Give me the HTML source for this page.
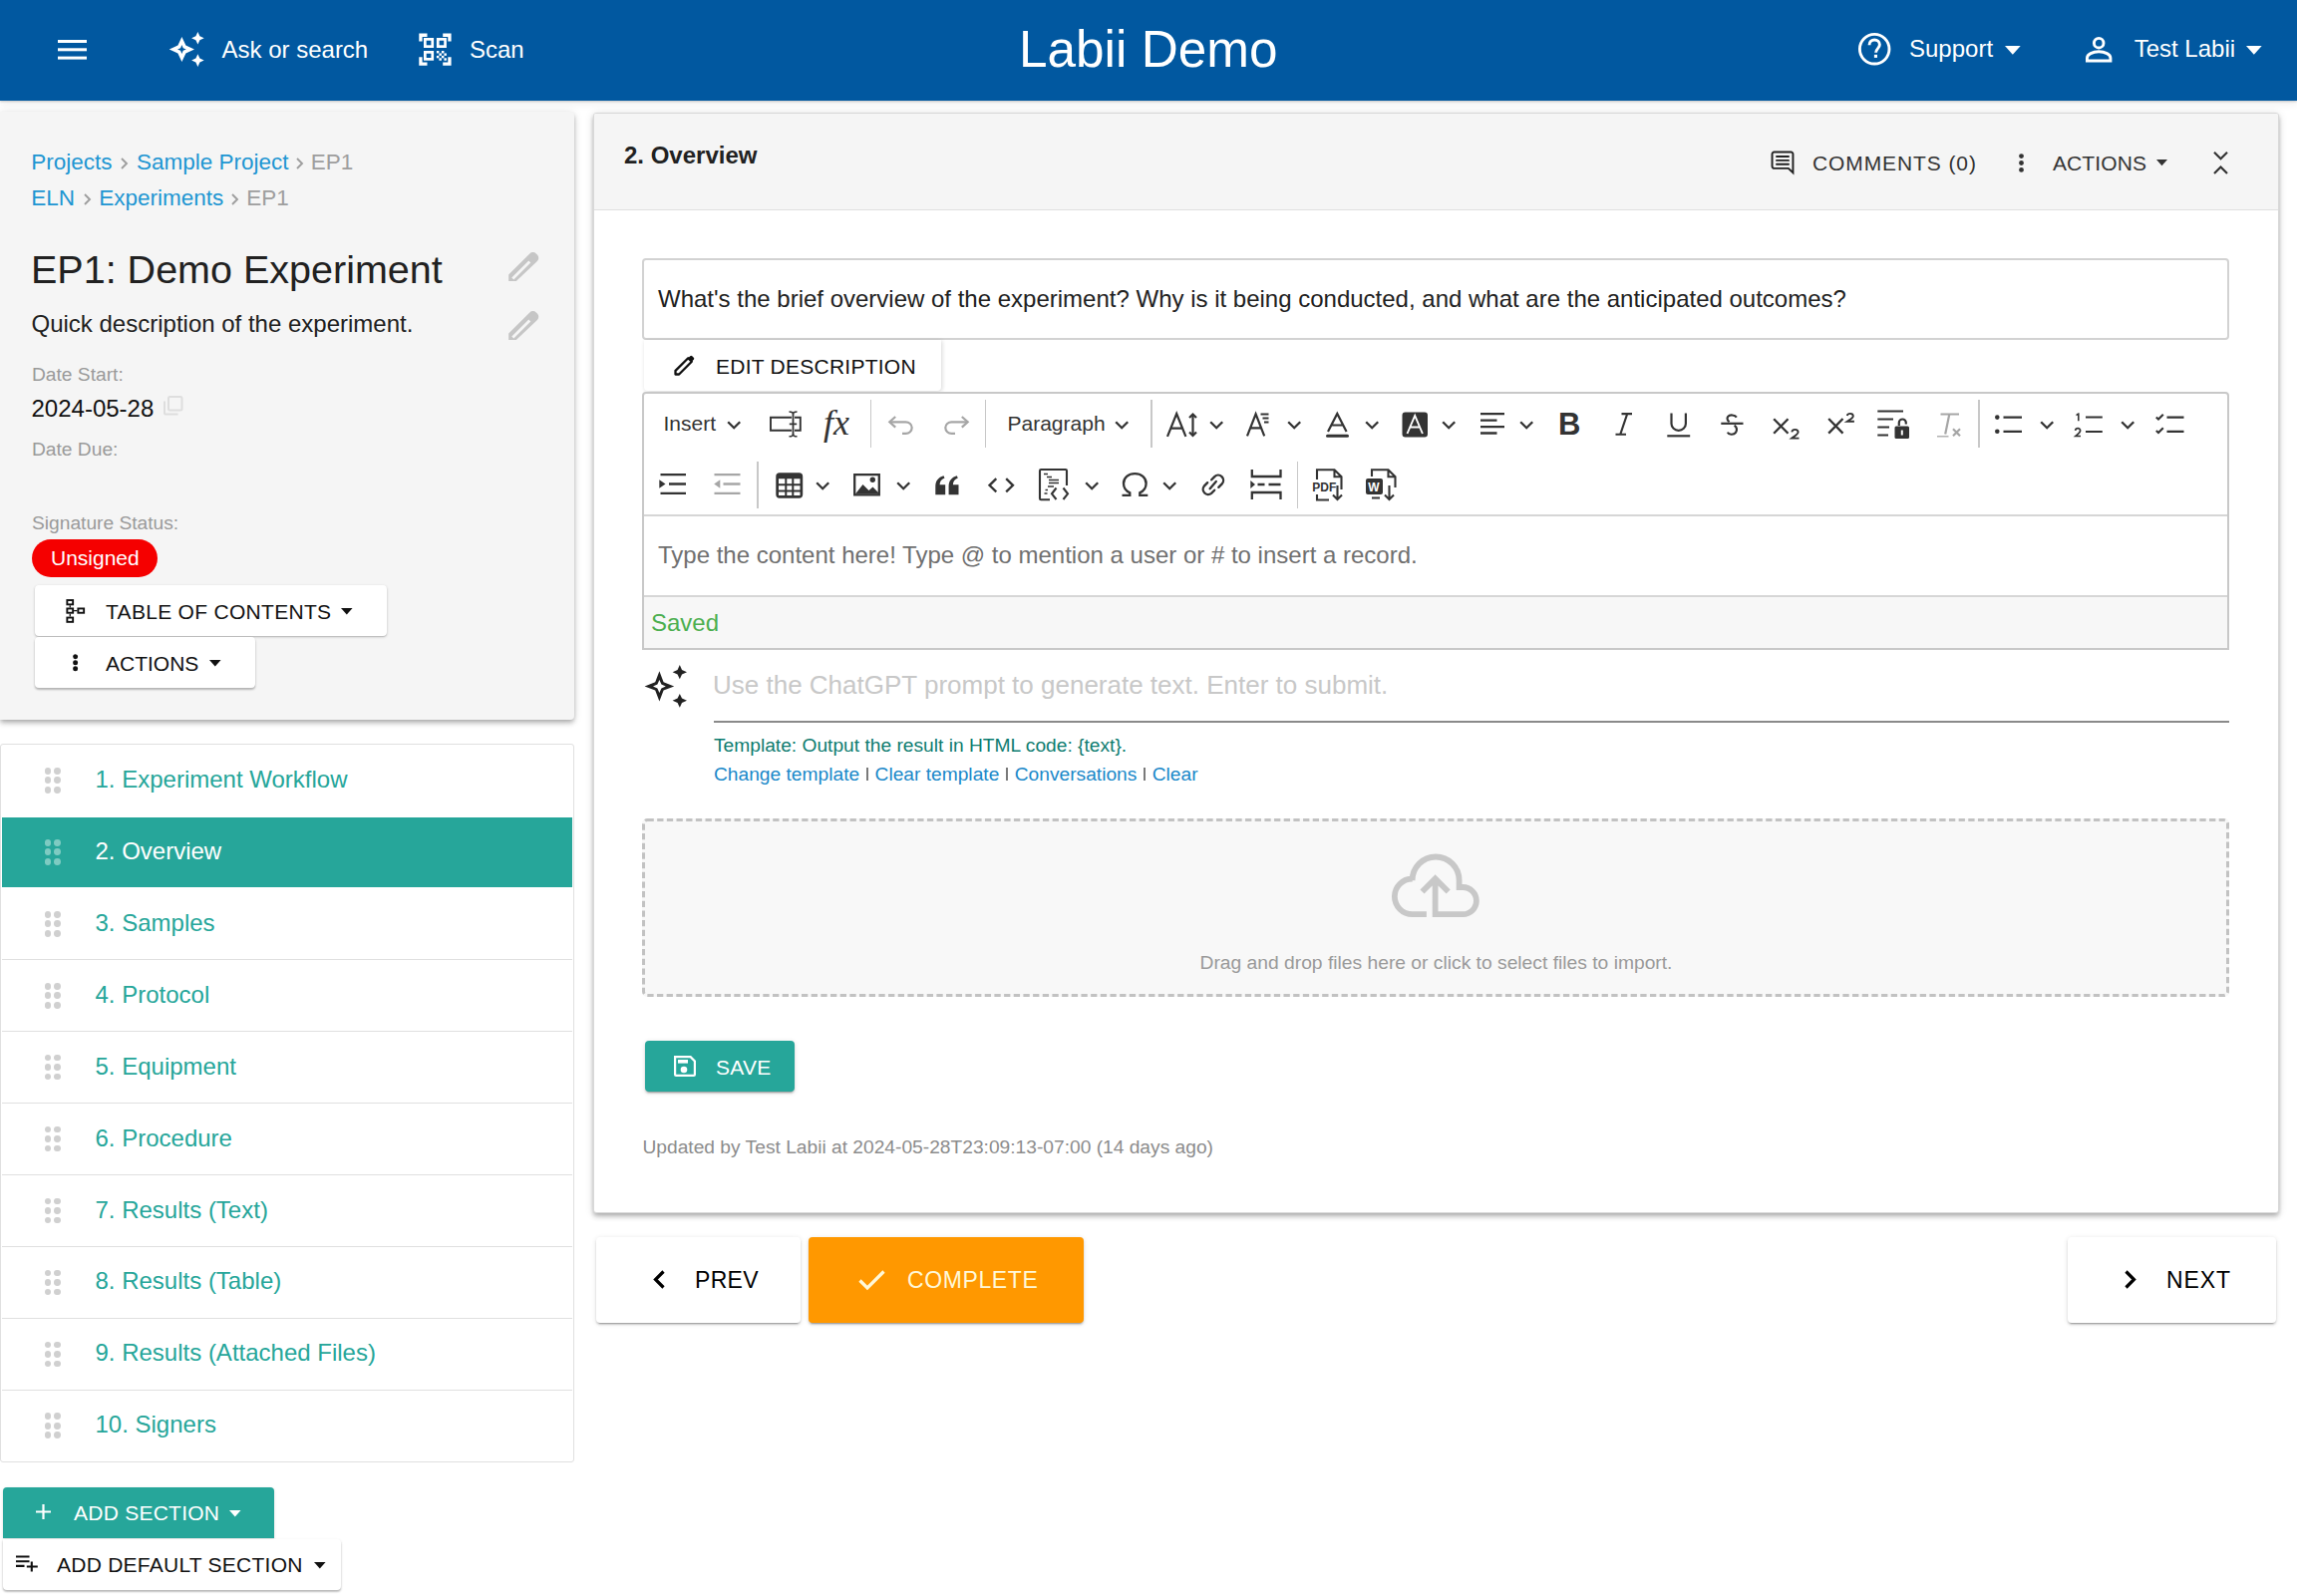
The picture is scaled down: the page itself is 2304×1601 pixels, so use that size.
<!DOCTYPE html>
<html><head><meta charset="utf-8">
<style>
*{box-sizing:border-box;margin:0;padding:0}
html,body{width:2304px;height:1601px;overflow:hidden;background:#fff;font-family:"Liberation Sans",sans-serif;color:#212121}
.abs{position:absolute}
.t{position:absolute;white-space:pre;line-height:1}
svg{position:absolute;overflow:visible}
.btnw{position:absolute;background:#fff;border-radius:4px;box-shadow:0 3px 1px -2px rgba(0,0,0,.2),0 2px 2px 0 rgba(0,0,0,.14),0 1px 5px 0 rgba(0,0,0,.12)}
.link{color:#1e96d2}
.grey{color:#9e9e9e}
.lbl{color:#9a9a9a}
</style></head><body>

<div class="abs" style="left:0;top:0;width:2304px;height:101px;background:#0158a0;box-shadow:0 1px 2px rgba(0,0,0,.18),0 3px 8px rgba(0,0,0,.07)"></div>
<svg style="left:57.5px;top:40px" width="29" height="20" viewBox="0 0 29 20"><g fill="#fff"><rect x="0" y="0" width="29" height="3"/><rect x="0" y="8.3" width="29" height="3"/><rect x="0" y="16.6" width="29" height="3"/></g></svg>
<svg style="left:165px;top:28px" width="45" height="44" viewBox="165 28 45 44"><path fill="#fff" fill-rule="evenodd" d="M182.40 36.90L186.40 45.50 195.00 49.50 186.40 53.50 182.40 62.10 178.40 53.50 169.80 49.50 178.40 45.50ZM182.40 45.10L183.70 48.20 186.80 49.50 183.70 50.80 182.40 53.90 181.10 50.80 178.00 49.50 181.10 48.20Z"/><path fill="#fff" d="M198.40 32.00L200.40 36.30 204.70 38.30 200.40 40.30 198.40 44.60 196.40 40.30 192.10 38.30 196.40 36.30ZM198.40 54.30L200.40 58.60 204.70 60.60 200.40 62.60 198.40 66.90 196.40 62.60 192.10 60.60 196.40 58.60Z"/></svg>
<div class="t" style="left:222.5px;top:37.7px;font-size:24px;color:#fff">Ask or search</div>
<svg style="left:410px;top:25px" width="55" height="50" viewBox="410 25 55 50"><g fill="none" stroke="#fff" stroke-width="3.3"><path d="M421.95 41.6V35.25H428.5M444.2 35.25H450.95V41.6M421.95 57.3V64.1H428.5M444.2 64.1H450.95V57.3"/></g><g fill="none" stroke="#fff" stroke-width="2.7"><rect x="426.35" y="39.35" width="7.4" height="7.3"/><rect x="439.25" y="39.35" width="7.3" height="7.3"/><rect x="426.35" y="52.35" width="7.4" height="7"/></g><g fill="#fff"><rect x="437.90" y="51.00" width="2.5" height="2.43"/><rect x="442.90" y="51.00" width="2.5" height="2.43"/><rect x="440.40" y="53.43" width="2.5" height="2.43"/><rect x="445.40" y="53.43" width="2.5" height="2.43"/><rect x="437.90" y="55.86" width="2.5" height="2.43"/><rect x="442.90" y="55.86" width="2.5" height="2.43"/><rect x="440.40" y="58.29" width="2.5" height="2.43"/><rect x="445.40" y="58.29" width="2.5" height="2.43"/></g></svg>
<div class="t" style="left:471px;top:37.7px;font-size:24px;color:#fff">Scan</div>
<div class="t" style="left:1022px;top:23.6px;font-size:51.3px;color:#fff">Labii Demo</div>
<svg style="left:1864px;top:33.3px" width="32.4" height="32.4" viewBox="0 0 32.4 32.4"><circle cx="16.2" cy="16.2" r="14.8" fill="none" stroke="#fff" stroke-width="2.9"/><path d="M11 12.2C11 9 13.3 7 16.2 7C19.1 7 21.4 9 21.4 11.8C21.4 15.5 17.6 15.8 17.6 19.8" fill="none" stroke="#fff" stroke-width="2.9"/><rect x="15.9" y="21.8" width="3.1" height="3.1" fill="#fff"/></svg>
<div class="t" style="left:1915px;top:36.8px;font-size:24px;color:#fff">Support</div>
<svg style="left:2010.8px;top:45.5px" width="15.7" height="8.8" viewBox="0 0 15.7 8.8"><path fill="#fff" d="M0 0h15.7L7.85 8.8z"/></svg>
<svg style="left:2091.8px;top:36.7px" width="26.4" height="25.4" viewBox="0 0 26.4 25.4"><g fill="none" stroke="#fff" stroke-width="2.9"><circle cx="13.2" cy="6.2" r="4.8"/><path d="M1.45 23.95V21.2C1.45 17.5 7 14.8 13.2 14.8S24.95 17.5 24.95 21.2V23.95Z"/></g></svg>
<div class="t" style="left:2140.7px;top:36.8px;font-size:24px;color:#fff">Test Labii</div>
<svg style="left:2253px;top:45.5px" width="15.7" height="8.8" viewBox="0 0 15.7 8.8"><path fill="#fff" d="M0 0h15.7L7.85 8.8z"/></svg>

<div class="abs" style="left:0;top:112px;width:576px;height:610px;background:#f5f5f5;border-radius:0 4px 4px 0;box-shadow:0 2px 4px -1px rgba(0,0,0,.2),0 4px 5px 0 rgba(0,0,0,.14),0 1px 10px 0 rgba(0,0,0,.12)"></div>
<div class="t link" style="left:31.3px;top:152.2px;font-size:22.5px">Projects</div><svg style="left:121.3px;top:158.3px" width="7" height="12" viewBox="0 0 7 12"><path d="M1 1l5 5-5 5" fill="none" stroke="#9e9e9e" stroke-width="1.9"/></svg><div class="t link" style="left:137px;top:152.2px;font-size:22.5px">Sample Project</div><svg style="left:296.8px;top:158.3px" width="7" height="12" viewBox="0 0 7 12"><path d="M1 1l5 5-5 5" fill="none" stroke="#9e9e9e" stroke-width="1.9"/></svg><div class="t grey" style="left:311.8px;top:152.2px;font-size:22.5px">EP1</div>
<div class="t link" style="left:31.3px;top:187.6px;font-size:22.5px">ELN</div><svg style="left:84px;top:193.7px" width="7" height="12" viewBox="0 0 7 12"><path d="M1 1l5 5-5 5" fill="none" stroke="#9e9e9e" stroke-width="1.9"/></svg><div class="t link" style="left:99.2px;top:187.6px;font-size:22.5px">Experiments</div><svg style="left:232.2px;top:193.7px" width="7" height="12" viewBox="0 0 7 12"><path d="M1 1l5 5-5 5" fill="none" stroke="#9e9e9e" stroke-width="1.9"/></svg><div class="t grey" style="left:247.3px;top:187.6px;font-size:22.5px">EP1</div>
<div class="t" style="left:31px;top:251.3px;font-size:39.5px;color:#212121">EP1: Demo Experiment</div>
<svg style="left:500px;top:245px" width="45" height="45" viewBox="500 245 45 45"><path fill="#c6c6c6" fill-rule="evenodd" transform="translate(0 0)" d="M510.2 282.1L510.2 275.5 531.3 254.4A4.6 4.6 0 0 1 537.8 254.4L538.9 255.5A4.6 4.6 0 0 1 538.9 262L517.8 282.1ZM513.3 278.6L530.3 261.6 532.3 263.6 515.3 280.6Z"/></svg>
<div class="t" style="left:31.5px;top:313.1px;font-size:24px;color:#212121">Quick description of the experiment.</div>
<svg style="left:500px;top:304.4px" width="45" height="45" viewBox="500 304.4 45 45"><path fill="#c6c6c6" fill-rule="evenodd" transform="translate(0 59.4)" d="M510.2 282.1L510.2 275.5 531.3 254.4A4.6 4.6 0 0 1 537.8 254.4L538.9 255.5A4.6 4.6 0 0 1 538.9 262L517.8 282.1ZM513.3 278.6L530.3 261.6 532.3 263.6 515.3 280.6Z"/></svg>
<div class="t lbl" style="left:32px;top:366.1px;font-size:19.2px">Date Start:</div>
<div class="t" style="left:31.5px;top:398.2px;font-size:24px;color:#111">2024-05-28</div>
<svg style="left:163.5px;top:396.5px" width="19.5" height="19.5" viewBox="0 0 19.5 19.5"><g fill="none" stroke="#dedede" stroke-width="2"><rect x="5" y="1" width="13.5" height="13.5" rx="1.5"/><path d="M1 5.5V17.5A1 1 0 0 0 2 18.5H14.5"/></g></svg>
<div class="t lbl" style="left:32px;top:440.6px;font-size:19.2px">Date Due:</div>
<div class="t lbl" style="left:32px;top:514.6px;font-size:19.2px">Signature Status:</div>
<div class="abs" style="left:32.2px;top:540.5px;width:126px;height:38.3px;border-radius:19.15px;background:#f50000"></div>
<div class="t" style="left:51px;top:549.2px;font-size:21px;color:#fff">Unsigned</div>
<div class="btnw" style="left:35.2px;top:587.2px;width:352.6px;height:51px;box-shadow:0 1px 3px rgba(0,0,0,.2),0 1px 1px rgba(0,0,0,.1)"></div>
<svg style="left:66.2px;top:601px" width="19.5" height="24" viewBox="0 0 19.5 24"><g fill="none" stroke="#111" stroke-width="1.9"><rect x="1.35" y="1.05" width="5.8" height="4.3"/><rect x="1.35" y="9.45" width="5.8" height="4.3"/><rect x="1.35" y="18.55" width="5.8" height="4.3"/><rect x="12.35" y="9.45" width="5.8" height="4.3"/></g><path d="M4.25 6.3V8.5M4.25 14.7V17.6M8.1 11.6H11.4" stroke="#111" stroke-width="1.3"/></svg>
<div class="t" style="left:106px;top:602.8px;font-size:21px;letter-spacing:0.3px;color:#111">TABLE OF CONTENTS</div>
<svg style="left:342.4px;top:609.8px" width="11.6" height="6.4" viewBox="0 0 11.6 6.4"><path fill="#111" d="M0 0h11.6L5.8 6.4z"/></svg>
<div class="btnw" style="left:35.2px;top:639.3px;width:220.6px;height:50.7px;box-shadow:0 2px 2px rgba(0,0,0,.2),0 1px 3px rgba(0,0,0,.12)"></div>
<svg style="left:72.7px;top:656px" width="5.3" height="17.4" viewBox="0 0 5.3 17.4"><g fill="#111"><circle cx="2.65" cy="2.65" r="2.5"/><circle cx="2.65" cy="8.7" r="2.5"/><circle cx="2.65" cy="14.75" r="2.5"/></g></svg>
<div class="t" style="left:106px;top:654.8px;font-size:21px;letter-spacing:0px;color:#111">ACTIONS</div>
<svg style="left:210.4px;top:661.8px" width="11.6" height="6.4" viewBox="0 0 11.6 6.4"><path fill="#111" d="M0 0h11.6L5.8 6.4z"/></svg>
<div class="abs" style="left:0;top:745.8px;width:576px;height:721.5px;border:1.6px solid #e0e0e0;border-radius:3px;background:#fff"></div>
<div class="abs" style="left:1.6px;top:961.85px;width:572.8px;height:1.6px;background:#e0e0e0"></div>
<div class="abs" style="left:1.6px;top:1033.80px;width:572.8px;height:1.6px;background:#e0e0e0"></div>
<div class="abs" style="left:1.6px;top:1105.75px;width:572.8px;height:1.6px;background:#e0e0e0"></div>
<div class="abs" style="left:1.6px;top:1177.70px;width:572.8px;height:1.6px;background:#e0e0e0"></div>
<div class="abs" style="left:1.6px;top:1249.65px;width:572.8px;height:1.6px;background:#e0e0e0"></div>
<div class="abs" style="left:1.6px;top:1321.60px;width:572.8px;height:1.6px;background:#e0e0e0"></div>
<div class="abs" style="left:1.6px;top:1393.55px;width:572.8px;height:1.6px;background:#e0e0e0"></div>
<div class="abs" style="left:44.70px;top:769.90px;width:6.8px;height:6.8px;border-radius:50%;background:#d0d0d0"></div>
<div class="abs" style="left:54.20px;top:769.90px;width:6.8px;height:6.8px;border-radius:50%;background:#d0d0d0"></div>
<div class="abs" style="left:44.70px;top:779.40px;width:6.8px;height:6.8px;border-radius:50%;background:#d0d0d0"></div>
<div class="abs" style="left:54.20px;top:779.40px;width:6.8px;height:6.8px;border-radius:50%;background:#d0d0d0"></div>
<div class="abs" style="left:44.70px;top:788.90px;width:6.8px;height:6.8px;border-radius:50%;background:#d0d0d0"></div>
<div class="abs" style="left:54.20px;top:788.90px;width:6.8px;height:6.8px;border-radius:50%;background:#d0d0d0"></div>
<div class="t" style="left:95.5px;top:769.80px;font-size:24px;color:#26a69a">1. Experiment Workflow</div>
<div class="abs" style="left:1.8px;top:819.8px;width:572px;height:69.9px;background:#26a69a"></div>
<div class="abs" style="left:44.70px;top:841.85px;width:6.8px;height:6.8px;border-radius:50%;background:#7ecbc2"></div>
<div class="abs" style="left:54.20px;top:841.85px;width:6.8px;height:6.8px;border-radius:50%;background:#7ecbc2"></div>
<div class="abs" style="left:44.70px;top:851.35px;width:6.8px;height:6.8px;border-radius:50%;background:#7ecbc2"></div>
<div class="abs" style="left:54.20px;top:851.35px;width:6.8px;height:6.8px;border-radius:50%;background:#7ecbc2"></div>
<div class="abs" style="left:44.70px;top:860.85px;width:6.8px;height:6.8px;border-radius:50%;background:#7ecbc2"></div>
<div class="abs" style="left:54.20px;top:860.85px;width:6.8px;height:6.8px;border-radius:50%;background:#7ecbc2"></div>
<div class="t" style="left:95.5px;top:841.75px;font-size:24px;color:#fff">2. Overview</div>
<div class="abs" style="left:44.70px;top:913.80px;width:6.8px;height:6.8px;border-radius:50%;background:#d0d0d0"></div>
<div class="abs" style="left:54.20px;top:913.80px;width:6.8px;height:6.8px;border-radius:50%;background:#d0d0d0"></div>
<div class="abs" style="left:44.70px;top:923.30px;width:6.8px;height:6.8px;border-radius:50%;background:#d0d0d0"></div>
<div class="abs" style="left:54.20px;top:923.30px;width:6.8px;height:6.8px;border-radius:50%;background:#d0d0d0"></div>
<div class="abs" style="left:44.70px;top:932.80px;width:6.8px;height:6.8px;border-radius:50%;background:#d0d0d0"></div>
<div class="abs" style="left:54.20px;top:932.80px;width:6.8px;height:6.8px;border-radius:50%;background:#d0d0d0"></div>
<div class="t" style="left:95.5px;top:913.70px;font-size:24px;color:#26a69a">3. Samples</div>
<div class="abs" style="left:44.70px;top:985.75px;width:6.8px;height:6.8px;border-radius:50%;background:#d0d0d0"></div>
<div class="abs" style="left:54.20px;top:985.75px;width:6.8px;height:6.8px;border-radius:50%;background:#d0d0d0"></div>
<div class="abs" style="left:44.70px;top:995.25px;width:6.8px;height:6.8px;border-radius:50%;background:#d0d0d0"></div>
<div class="abs" style="left:54.20px;top:995.25px;width:6.8px;height:6.8px;border-radius:50%;background:#d0d0d0"></div>
<div class="abs" style="left:44.70px;top:1004.75px;width:6.8px;height:6.8px;border-radius:50%;background:#d0d0d0"></div>
<div class="abs" style="left:54.20px;top:1004.75px;width:6.8px;height:6.8px;border-radius:50%;background:#d0d0d0"></div>
<div class="t" style="left:95.5px;top:985.65px;font-size:24px;color:#26a69a">4. Protocol</div>
<div class="abs" style="left:44.70px;top:1057.70px;width:6.8px;height:6.8px;border-radius:50%;background:#d0d0d0"></div>
<div class="abs" style="left:54.20px;top:1057.70px;width:6.8px;height:6.8px;border-radius:50%;background:#d0d0d0"></div>
<div class="abs" style="left:44.70px;top:1067.20px;width:6.8px;height:6.8px;border-radius:50%;background:#d0d0d0"></div>
<div class="abs" style="left:54.20px;top:1067.20px;width:6.8px;height:6.8px;border-radius:50%;background:#d0d0d0"></div>
<div class="abs" style="left:44.70px;top:1076.70px;width:6.8px;height:6.8px;border-radius:50%;background:#d0d0d0"></div>
<div class="abs" style="left:54.20px;top:1076.70px;width:6.8px;height:6.8px;border-radius:50%;background:#d0d0d0"></div>
<div class="t" style="left:95.5px;top:1057.60px;font-size:24px;color:#26a69a">5. Equipment</div>
<div class="abs" style="left:44.70px;top:1129.65px;width:6.8px;height:6.8px;border-radius:50%;background:#d0d0d0"></div>
<div class="abs" style="left:54.20px;top:1129.65px;width:6.8px;height:6.8px;border-radius:50%;background:#d0d0d0"></div>
<div class="abs" style="left:44.70px;top:1139.15px;width:6.8px;height:6.8px;border-radius:50%;background:#d0d0d0"></div>
<div class="abs" style="left:54.20px;top:1139.15px;width:6.8px;height:6.8px;border-radius:50%;background:#d0d0d0"></div>
<div class="abs" style="left:44.70px;top:1148.65px;width:6.8px;height:6.8px;border-radius:50%;background:#d0d0d0"></div>
<div class="abs" style="left:54.20px;top:1148.65px;width:6.8px;height:6.8px;border-radius:50%;background:#d0d0d0"></div>
<div class="t" style="left:95.5px;top:1129.55px;font-size:24px;color:#26a69a">6. Procedure</div>
<div class="abs" style="left:44.70px;top:1201.60px;width:6.8px;height:6.8px;border-radius:50%;background:#d0d0d0"></div>
<div class="abs" style="left:54.20px;top:1201.60px;width:6.8px;height:6.8px;border-radius:50%;background:#d0d0d0"></div>
<div class="abs" style="left:44.70px;top:1211.10px;width:6.8px;height:6.8px;border-radius:50%;background:#d0d0d0"></div>
<div class="abs" style="left:54.20px;top:1211.10px;width:6.8px;height:6.8px;border-radius:50%;background:#d0d0d0"></div>
<div class="abs" style="left:44.70px;top:1220.60px;width:6.8px;height:6.8px;border-radius:50%;background:#d0d0d0"></div>
<div class="abs" style="left:54.20px;top:1220.60px;width:6.8px;height:6.8px;border-radius:50%;background:#d0d0d0"></div>
<div class="t" style="left:95.5px;top:1201.50px;font-size:24px;color:#26a69a">7. Results (Text)</div>
<div class="abs" style="left:44.70px;top:1273.55px;width:6.8px;height:6.8px;border-radius:50%;background:#d0d0d0"></div>
<div class="abs" style="left:54.20px;top:1273.55px;width:6.8px;height:6.8px;border-radius:50%;background:#d0d0d0"></div>
<div class="abs" style="left:44.70px;top:1283.05px;width:6.8px;height:6.8px;border-radius:50%;background:#d0d0d0"></div>
<div class="abs" style="left:54.20px;top:1283.05px;width:6.8px;height:6.8px;border-radius:50%;background:#d0d0d0"></div>
<div class="abs" style="left:44.70px;top:1292.55px;width:6.8px;height:6.8px;border-radius:50%;background:#d0d0d0"></div>
<div class="abs" style="left:54.20px;top:1292.55px;width:6.8px;height:6.8px;border-radius:50%;background:#d0d0d0"></div>
<div class="t" style="left:95.5px;top:1273.45px;font-size:24px;color:#26a69a">8. Results (Table)</div>
<div class="abs" style="left:44.70px;top:1345.50px;width:6.8px;height:6.8px;border-radius:50%;background:#d0d0d0"></div>
<div class="abs" style="left:54.20px;top:1345.50px;width:6.8px;height:6.8px;border-radius:50%;background:#d0d0d0"></div>
<div class="abs" style="left:44.70px;top:1355.00px;width:6.8px;height:6.8px;border-radius:50%;background:#d0d0d0"></div>
<div class="abs" style="left:54.20px;top:1355.00px;width:6.8px;height:6.8px;border-radius:50%;background:#d0d0d0"></div>
<div class="abs" style="left:44.70px;top:1364.50px;width:6.8px;height:6.8px;border-radius:50%;background:#d0d0d0"></div>
<div class="abs" style="left:54.20px;top:1364.50px;width:6.8px;height:6.8px;border-radius:50%;background:#d0d0d0"></div>
<div class="t" style="left:95.5px;top:1345.40px;font-size:24px;color:#26a69a">9. Results (Attached Files)</div>
<div class="abs" style="left:44.70px;top:1417.45px;width:6.8px;height:6.8px;border-radius:50%;background:#d0d0d0"></div>
<div class="abs" style="left:54.20px;top:1417.45px;width:6.8px;height:6.8px;border-radius:50%;background:#d0d0d0"></div>
<div class="abs" style="left:44.70px;top:1426.95px;width:6.8px;height:6.8px;border-radius:50%;background:#d0d0d0"></div>
<div class="abs" style="left:54.20px;top:1426.95px;width:6.8px;height:6.8px;border-radius:50%;background:#d0d0d0"></div>
<div class="abs" style="left:44.70px;top:1436.45px;width:6.8px;height:6.8px;border-radius:50%;background:#d0d0d0"></div>
<div class="abs" style="left:54.20px;top:1436.45px;width:6.8px;height:6.8px;border-radius:50%;background:#d0d0d0"></div>
<div class="t" style="left:95.5px;top:1417.35px;font-size:24px;color:#26a69a">10. Signers</div>
<div class="abs" style="left:3.4px;top:1491.8px;width:272.1px;height:51px;background:#26a69a;border-radius:4px 4px 0 0;box-shadow:0 1px 3px rgba(0,0,0,.15)"></div>
<svg style="left:35.8px;top:1509.4px" width="15" height="15" viewBox="0 0 15 15"><path fill="none" stroke="#fff" stroke-width="2.2" d="M7.5 0v15M0 7.5h15"/></svg>
<div class="t" style="left:74px;top:1507.2px;font-size:21px;letter-spacing:0.25px;color:#fff">ADD SECTION</div>
<svg style="left:230.4px;top:1514.6px" width="11.6" height="6.4" viewBox="0 0 11.6 6.4"><path fill="#fff" d="M0 0h11.6L5.8 6.4z"/></svg>
<div class="btnw" style="left:3.4px;top:1544px;width:338.7px;height:51px;border-radius:0 4px 4px 4px;box-shadow:0 2px 2px rgba(0,0,0,.2),0 1px 3px rgba(0,0,0,.12)"></div>
<svg style="left:15.5px;top:1560px" width="22" height="17" viewBox="0 0 22 17"><g fill="none" stroke="#111" stroke-width="2.1"><path d="M0 1.5H13.5M0 6.2H13.5M0 10.9H8.5M15.8 6.5V16.5M10.8 11.5H21.8"/></g></svg>
<div class="t" style="left:57px;top:1559.1px;font-size:21px;letter-spacing:0.25px;color:#111">ADD DEFAULT SECTION</div>
<svg style="left:314.7px;top:1566.8px" width="11.6" height="6.4" viewBox="0 0 11.6 6.4"><path fill="#111" d="M0 0h11.6L5.8 6.4z"/></svg>

<div class="abs" style="left:594.5px;top:112.5px;width:1691.5px;height:1104px;background:#fff;border:1.5px solid #d8d8d8;border-radius:3px;box-shadow:0 2px 4px -1px rgba(0,0,0,.2),0 4px 5px 0 rgba(0,0,0,.14),0 1px 10px 0 rgba(0,0,0,.12)"></div>
<div class="abs" style="left:596px;top:114px;width:1688.5px;height:97px;background:#f5f5f5;border-bottom:1.8px solid #e0e0e0;border-radius:2px 2px 0 0"></div>
<div class="t" style="left:626px;top:143.9px;font-size:24px;font-weight:700;color:#212121">2. Overview</div>
<!-- main header right -->
<svg style="left:1765px;top:145px" width="45" height="35" viewBox="1765 145 45 35"><path d="M1793.8 168.85H1779.6A2 2 0 0 1 1777.55 166.8V154.6A2 2 0 0 1 1779.6 152.55H1796.4A2 2 0 0 1 1798.45 154.6V173.3Z" fill="none" stroke="#222" stroke-width="1.95" stroke-linejoin="miter"/><path d="M1782 157H1794M1782 160.9H1794M1782 164.8H1794" stroke="#222" stroke-width="1.9" stroke-linecap="round"/></svg>
<div class="t up2" style="left:1818px;top:153px;font-size:21px;letter-spacing:0.9px;color:#333">COMMENTS (0)</div>
<svg style="left:2024px;top:154px" width="7" height="19" viewBox="0 0 7 19"><g fill="#333"><circle cx="3.5" cy="2.6" r="2.4"/><circle cx="3.5" cy="9.5" r="2.4"/><circle cx="3.5" cy="16.4" r="2.4"/></g></svg>
<div class="t" style="left:2059px;top:153px;font-size:21px;letter-spacing:0.1px;color:#333">ACTIONS</div>
<svg style="left:2163px;top:160.4px" width="11" height="6.2" viewBox="0 0 11 6.2"><path fill="#333" d="M0 0h11L5.5 6.2z"/></svg>
<svg style="left:2220px;top:152px" width="15" height="22" viewBox="0 0 15 22"><g fill="none" stroke="#333" stroke-width="2.2"><path d="M1 0.8l6.5 6.5L14 0.8M1 22l6.5-6.5L14 22"/></g></svg>

<!-- description box -->
<div class="abs" style="left:644px;top:259px;width:1592px;height:82px;border:2px solid #d2d2d2;border-radius:4px;background:#fff"></div>
<div class="t" style="left:660px;top:288px;font-size:24px;color:#212121">What's the brief overview of the experiment? Why is it being conducted, and what are the anticipated outcomes?</div>
<div class="btnw" style="left:646px;top:341px;width:298px;height:51px;border-radius:0 0 4px 4px;box-shadow:1px 1px 4px rgba(0,0,0,.16)"></div>
<svg style="left:676px;top:356px" width="21" height="21" viewBox="0 0 21 21"><g fill="none" stroke="#111" stroke-width="2.3" stroke-linejoin="round"><path d="M1.5 19.5v-3.6L14.2 3.2l3.6 3.6L5.1 19.5z"/></g><path fill="#111" d="M14.2 3.2l2-2a1.5 1.5 0 0 1 2.1 0l1.5 1.5a1.5 1.5 0 0 1 0 2.1l-2 2z"/></svg>
<div class="t" style="left:718px;top:357.2px;font-size:21px;letter-spacing:0.25px;color:#111">EDIT DESCRIPTION</div>

<!-- editor -->
<div class="abs" style="left:644px;top:393px;width:1592px;height:259px;border:2px solid #c8c8c8;border-radius:4px 4px 0 0;background:#fff"></div>
<div class="abs" style="left:646px;top:516px;width:1588px;height:2px;background:#d6d6d6"></div>
<div class="abs" style="left:646px;top:597px;width:1588px;height:2px;background:#d6d6d6"></div>
<div class="abs" style="left:646px;top:599px;width:1588px;height:51px;background:#f7f7f7"></div>
<div class="t" style="left:660px;top:545.2px;font-size:24px;color:#707070">Type the content here! Type @ to mention a user or # to insert a record.</div>
<div class="t" style="left:653px;top:612.6px;font-size:24px;color:#4caf50">Saved</div>

<div class="t" style="left:665.5px;top:414.3px;font-size:21px;color:#333">Insert</div>
<svg style="left:729.1px;top:422.2px" width="14.5" height="9" viewBox="0 0 14.5 9"><path d="M1.2 1.2l6 6 6-6" fill="none" stroke="#333" stroke-width="2.3"/></svg>
<svg style="left:772px;top:411.8px" width="32" height="27" viewBox="0 0 32 27"><path d="M22 6.8H1V19.8H22M25 6.8H30.8V19.8H25" fill="none" stroke="#333" stroke-width="1.9" stroke-linecap="butt" stroke-linejoin="miter"/><path d="M23.5 2.5V24.3M19.8 13.3H27.2" fill="none" stroke="#333" stroke-width="1.8" stroke-linecap="butt" stroke-linejoin="miter"/><path d="M19.5 1C21.5 1 23.5 1.8 23.5 3.3C23.5 1.8 25.5 1 27.5 1M19.5 25.8C21.5 25.8 23.5 25 23.5 23.5C23.5 25 25.5 25.8 27.5 25.8" fill="none" stroke="#333" stroke-width="1.6" stroke-linecap="butt" stroke-linejoin="miter"/></svg>
<div class="t" style="left:826px;top:406px;font-size:36px;font-family:'Liberation Serif',serif;font-style:italic;color:#333">fx</div>
<div class="abs" style="left:872.75px;top:401px;width:1.5px;height:48px;background:#c8c8c8"></div>
<svg style="left:891px;top:416.5px" width="27" height="19" viewBox="0 0 27 19"><path d="M7.2 1L1.3 6.3 7.2 11.6" fill="none" stroke="#a6a6a6" stroke-width="2.2" stroke-linecap="butt" stroke-linejoin="miter"/><path d="M1.3 6.3H17.5A6.2 5.8 0 0 1 17.5 17.9H14" fill="none" stroke="#a6a6a6" stroke-width="2.2" stroke-linecap="butt" stroke-linejoin="miter"/></svg>
<svg style="left:945px;top:416.5px" width="27" height="19" viewBox="0 0 27 19"><path d="M19.8 1L25.7 6.3 19.8 11.6" fill="none" stroke="#a6a6a6" stroke-width="2.2" stroke-linecap="butt" stroke-linejoin="miter"/><path d="M25.7 6.3H9.5A6.2 5.8 0 0 0 9.5 17.9H13" fill="none" stroke="#a6a6a6" stroke-width="2.2" stroke-linecap="butt" stroke-linejoin="miter"/></svg>
<div class="abs" style="left:987.85px;top:401px;width:1.5px;height:48px;background:#c8c8c8"></div>
<div class="t" style="left:1010.5px;top:414.3px;font-size:21px;color:#333">Paragraph</div>
<svg style="left:1118.3px;top:422.2px" width="14.5" height="9" viewBox="0 0 14.5 9"><path d="M1.2 1.2l6 6 6-6" fill="none" stroke="#333" stroke-width="2.3"/></svg>
<div class="abs" style="left:1154.45px;top:401px;width:1.5px;height:48px;background:#c8c8c8"></div>
<svg style="left:1170px;top:413.5px" width="32" height="24.5" viewBox="0 0 32 24.5"><path d="M1 23.8L10.2 1 19.4 23.8M4.6 15.6H15.8" fill="none" stroke="#333" stroke-width="2.2" stroke-linecap="butt" stroke-linejoin="miter"/><path d="M26.5 2V22.5" fill="none" stroke="#333" stroke-width="2.2" stroke-linecap="butt" stroke-linejoin="miter"/><path d="M23 5L26.5 1.5 30 5M23 19.5L26.5 23 30 19.5" fill="none" stroke="#333" stroke-width="2.2" stroke-linecap="butt" stroke-linejoin="miter"/></svg>
<svg style="left:1213.1px;top:422.2px" width="14.5" height="9" viewBox="0 0 14.5 9"><path d="M1.2 1.2l6 6 6-6" fill="none" stroke="#333" stroke-width="2.3"/></svg>
<svg style="left:1250px;top:413.5px" width="23" height="24" viewBox="0 0 23 24"><path d="M1 23.3L9.6 1.3 18.2 23.3M4.4 15.3H14.8" fill="none" stroke="#333" stroke-width="2.2" stroke-linecap="butt" stroke-linejoin="miter"/><path d="M14.5 1.5H22.5M16.5 5.5H22.5M18 9.5H22.5" fill="none" stroke="#333" stroke-width="2" stroke-linecap="butt" stroke-linejoin="miter"/></svg>
<svg style="left:1291.0px;top:422.2px" width="14.5" height="9" viewBox="0 0 14.5 9"><path d="M1.2 1.2l6 6 6-6" fill="none" stroke="#333" stroke-width="2.3"/></svg>
<svg style="left:1330px;top:413.5px" width="23" height="25.5" viewBox="0 0 23 25.5"><path d="M2 19L11.3 1 20.6 19M5.6 12.5H17" fill="none" stroke="#333" stroke-width="2.2" stroke-linecap="butt" stroke-linejoin="miter"/><path d="M1.5 21.8H21.5A1.5 1.5 0 0 1 21.5 24.8H1.5A1.5 1.5 0 0 1 1.5 21.8Z" fill="#333"/></svg>
<svg style="left:1368.8px;top:422.2px" width="14.5" height="9" viewBox="0 0 14.5 9"><path d="M1.2 1.2l6 6 6-6" fill="none" stroke="#333" stroke-width="2.3"/></svg>
<svg style="left:1406px;top:412.5px" width="26.5" height="26" viewBox="0 0 26.5 26"><path d="M3.5 0.5H23A3 3 0 0 1 26 3.5V22.5A3 3 0 0 1 23 25.5H3.5A3 3 0 0 1 0.5 22.5V3.5A3 3 0 0 1 3.5 0.5Z" fill="#333"/><path d="M5.5 22L13.2 4 20.9 22M8.5 15.5H18" fill="none" stroke="#fff" stroke-width="1.9" stroke-linecap="butt" stroke-linejoin="miter"/></svg>
<svg style="left:1446.4px;top:422.2px" width="14.5" height="9" viewBox="0 0 14.5 9"><path d="M1.2 1.2l6 6 6-6" fill="none" stroke="#333" stroke-width="2.3"/></svg>
<svg style="left:1484px;top:414px" width="26" height="22.5" viewBox="0 0 26 22.5"><path d="M1 1.2H25M1 7.6H17.5M1 14.1H25M1 20.5H17.5" fill="none" stroke="#333" stroke-width="2.3" stroke-linecap="butt" stroke-linejoin="miter"/></svg>
<svg style="left:1524.0px;top:422.2px" width="14.5" height="9" viewBox="0 0 14.5 9"><path d="M1.2 1.2l6 6 6-6" fill="none" stroke="#333" stroke-width="2.3"/></svg>
<div class="t" style="left:1563px;top:409.5px;font-size:31px;font-weight:700;color:#333">B</div>
<svg style="left:1620px;top:414px" width="17.5" height="23" viewBox="0 0 17.5 23"><path d="M6.5 1.1H17M0.5 21.8H11M12.2 1.1L5.2 21.8" fill="none" stroke="#333" stroke-width="2.1" stroke-linecap="butt" stroke-linejoin="miter"/></svg>
<svg style="left:1671.5px;top:413.5px" width="23.5" height="25" viewBox="0 0 23.5 25"><path d="M4.5 0.5V11A7.2 6.8 0 0 0 18.9 11V0.5" fill="none" stroke="#333" stroke-width="2.2" stroke-linecap="butt" stroke-linejoin="miter"/><path d="M0.3 23.3H23.2" fill="none" stroke="#333" stroke-width="2.2" stroke-linecap="butt" stroke-linejoin="miter"/></svg>
<svg style="left:1725.5px;top:414.5px" width="23" height="22.5" viewBox="0 0 23 22.5"><path d="M0.3 9.8H22.5" fill="none" stroke="#333" stroke-width="2.2" stroke-linecap="butt" stroke-linejoin="miter"/><path d="M15.8 3.6C14.4 1.2 9 0.6 7.2 2.9C5.8 4.7 6.8 6.9 8.6 8.2M13.6 11.8C16.2 13.3 16.7 16.4 15 18.8C13 21.6 8 21.2 6.8 18.6" fill="none" stroke="#333" stroke-width="2.2" stroke-linecap="butt" stroke-linejoin="miter"/></svg>
<svg style="left:1777.5px;top:419px" width="28" height="21.5" viewBox="0 0 28 21.5"><path d="M1.2 1.2L15.5 15.8M15.5 1.2L1.2 15.8" fill="none" stroke="#333" stroke-width="2.3" stroke-linecap="butt" stroke-linejoin="miter"/><path d="M19.3 14.3C19.6 12.6 21 11.9 22.5 11.9C24.3 11.9 25.6 13 25.6 14.6C25.6 16.5 23.6 17.5 19.3 20.6H26.5" fill="none" stroke="#333" stroke-width="1.9" stroke-linecap="butt" stroke-linejoin="miter"/></svg>
<svg style="left:1832.5px;top:414px" width="28.5" height="22.5" viewBox="0 0 28.5 22.5"><path d="M1.2 6L15.5 20.6M15.5 6L1.2 20.6" fill="none" stroke="#333" stroke-width="2.3" stroke-linecap="butt" stroke-linejoin="miter"/><path d="M19.8 3C20.1 1.5 21.3 0.9 22.8 0.9C24.5 0.9 25.8 1.9 25.8 3.4C25.8 5.2 24 6 19.8 8.7H26.9" fill="none" stroke="#333" stroke-width="1.9" stroke-linecap="butt" stroke-linejoin="miter"/></svg>
<svg style="left:1883px;top:410.5px" width="32.5" height="29.5" viewBox="0 0 32.5 29.5"><path d="M0.3 1.5H26M0.3 9.5H16M0.3 17.5H12M0.3 25.5H11" fill="none" stroke="#333" stroke-width="2.2" stroke-linecap="butt" stroke-linejoin="miter"/><path d="M21.8 16V13A3.5 3.5 0 0 1 28.8 13V14.5" fill="none" stroke="#333" stroke-width="2.2" stroke-linecap="butt" stroke-linejoin="miter"/><path d="M19 16.5H30.5A1.5 1.5 0 0 1 32 18V27.5A1.5 1.5 0 0 1 30.5 29H19A1.5 1.5 0 0 1 17.5 27.5V18A1.5 1.5 0 0 1 19 16.5Z" fill="#333"/><path d="M23.8 20.5H25.8V25.5H23.8Z" fill="#fff"/></svg>
<svg style="left:1942px;top:414px" width="25.5" height="25" viewBox="0 0 25.5 25"><path d="M4.5 1.5H23M13.3 1.5L9.2 21.5" fill="none" stroke="#a6a6a6" stroke-width="2.2" stroke-linecap="butt" stroke-linejoin="miter"/><path d="M1 23.8H12.5" fill="none" stroke="#a6a6a6" stroke-width="1.3" stroke-linecap="butt" stroke-linejoin="miter"/><path d="M17 16.2L24 23.2M24 16.2L17 23.2" fill="none" stroke="#a6a6a6" stroke-width="2.2" stroke-linecap="butt" stroke-linejoin="miter"/></svg>
<div class="abs" style="left:1984.25px;top:401px;width:1.5px;height:48px;background:#c8c8c8"></div>
<svg style="left:2001px;top:416px" width="27.5" height="20" viewBox="0 0 27.5 20"><path d="M2.3 0.3A2.3 2.3 0 1 1 2.3 4.9A2.3 2.3 0 1 1 2.3 0.3ZM2.3 14.5A2.3 2.3 0 1 1 2.3 19.1A2.3 2.3 0 1 1 2.3 14.5Z" fill="#333"/><path d="M8.5 2.6H27M8.5 16.8H27" fill="none" stroke="#333" stroke-width="2.2" stroke-linecap="butt" stroke-linejoin="miter"/></svg>
<svg style="left:2045.6px;top:422.2px" width="14.5" height="9" viewBox="0 0 14.5 9"><path d="M1.2 1.2l6 6 6-6" fill="none" stroke="#333" stroke-width="2.3"/></svg>
<svg style="left:2080.5px;top:413.5px" width="28.5" height="25" viewBox="0 0 28.5 25"><path d="M1.5 1.5L3.6 0.3H4.6V8.2H3V2.4L1.5 3.2Z" fill="#333"/><path d="M0.6 17.8C0.9 16.3 2 15.7 3.2 15.7C4.7 15.7 5.6 16.6 5.6 17.9C5.6 19.5 4.2 20.5 0.9 23.5H6" fill="none" stroke="#333" stroke-width="1.7" stroke-linecap="butt" stroke-linejoin="miter"/><path d="M11 4.5H27.8M11 19H27.8" fill="none" stroke="#333" stroke-width="2.2" stroke-linecap="butt" stroke-linejoin="miter"/></svg>
<svg style="left:2126.6px;top:422.2px" width="14.5" height="9" viewBox="0 0 14.5 9"><path d="M1.2 1.2l6 6 6-6" fill="none" stroke="#333" stroke-width="2.3"/></svg>
<svg style="left:2161.5px;top:415px" width="29" height="21" viewBox="0 0 29 21"><path d="M0.8 3.5L3 5.6 7.8 0.8M0.8 17L3 19.1 7.8 14.3" fill="none" stroke="#333" stroke-width="2.1" stroke-linecap="butt" stroke-linejoin="miter"/><path d="M11.5 3.6H28.5M11.5 17.9H28.5" fill="none" stroke="#333" stroke-width="2.2" stroke-linecap="butt" stroke-linejoin="miter"/></svg>
<svg style="left:660.5px;top:475px" width="27.5" height="22" viewBox="0 0 27.5 22"><path d="M1.5 1.2H27M10 10.5H27M1.5 19.8H27" fill="none" stroke="#333" stroke-width="2.3" stroke-linecap="butt" stroke-linejoin="miter"/><path d="M0.3 6.3L6.5 10.5 0.3 14.7Z" fill="#333"/></svg>
<svg style="left:714.5px;top:475px" width="28" height="22" viewBox="0 0 28 22"><path d="M1.5 1.2H27.5M10.5 10.5H27.5M1.5 19.8H27.5" fill="none" stroke="#a6a6a6" stroke-width="2.3" stroke-linecap="butt" stroke-linejoin="miter"/><path d="M7.3 6.3L1.2 10.5 7.3 14.7Z" fill="#a6a6a6"/></svg>
<div class="abs" style="left:759.45px;top:463px;width:1.5px;height:47px;background:#c8c8c8"></div>
<svg style="left:777.5px;top:474px" width="27.5" height="26" viewBox="0 0 27.5 26"><path d="M4 0.3H23.5A3.7 3.7 0 0 1 27.2 4V22A3.7 3.7 0 0 1 23.5 25.7H4A3.7 3.7 0 0 1 0.3 22V4A3.7 3.7 0 0 1 4 0.3Z" fill="#333"/><path d="M3 6.3H9.3V11.3H3ZM11.3 6.3H16.3V11.3H11.3ZM18.3 6.3H24.5V11.3H18.3ZM3 13.3H9.3V17.5H3ZM11.3 13.3H16.3V17.5H11.3ZM18.3 13.3H24.5V17.5H18.3ZM3 19.5H9.3V23H3ZM11.3 19.5H16.3V23H11.3ZM18.3 19.5H24.5V23H18.3Z" fill="#fff"/></svg>
<svg style="left:818.2px;top:482.7px" width="14.5" height="9" viewBox="0 0 14.5 9"><path d="M1.2 1.2l6 6 6-6" fill="none" stroke="#333" stroke-width="2.3"/></svg>
<svg style="left:855.5px;top:475px" width="27" height="22.5" viewBox="0 0 27 22.5"><path d="M1.2 1.2H25.8V21.3H1.2Z" fill="none" stroke="#333" stroke-width="2.3" stroke-linecap="butt" stroke-linejoin="miter"/><path d="M2 20.5L9.5 11 15.5 17 19.5 13.5 25 19V20.5Z" fill="#333"/><path d="M19.3 3.5A2.7 2.7 0 1 1 19.3 8.9A2.7 2.7 0 1 1 19.3 3.5Z" fill="#333"/></svg>
<svg style="left:899.2px;top:482.7px" width="14.5" height="9" viewBox="0 0 14.5 9"><path d="M1.2 1.2l6 6 6-6" fill="none" stroke="#333" stroke-width="2.3"/></svg>
<svg style="left:938px;top:476.5px" width="24" height="19.5" viewBox="0 0 24 19.5"><path d="M0.3 19.2V11C0.3 5.5 3 2 8.5 0.3L9.5 2.5C6 4 4.6 6.3 4.6 9.2H10.2V19.2ZM13.6 19.2V11C13.6 5.5 16.3 2 21.8 0.3L22.8 2.5C19.3 4 17.9 6.3 17.9 9.2H23.5V19.2Z" fill="#333"/></svg>
<svg style="left:990.5px;top:479px" width="26.5" height="16" viewBox="0 0 26.5 16"><path d="M8.3 1.2L1.5 7.8 8.3 14.4M18.2 1.2L25 7.8 18.2 14.4" fill="none" stroke="#333" stroke-width="2.3" stroke-linecap="butt" stroke-linejoin="miter"/></svg>
<svg style="left:1042px;top:469.5px" width="32.5" height="32.5" viewBox="0 0 32.5 32.5"><path d="M11 31.3H2.2A1.2 1.2 0 0 1 1 30.1V2.2A1.2 1.2 0 0 1 2.2 1H26.8A1.2 1.2 0 0 1 28 2.2V17" fill="none" stroke="#333" stroke-width="2.1" stroke-linecap="butt" stroke-linejoin="miter"/><path d="M5 5.5H9M8 8.5H13M10 11.5H20M10 14.5H20M9 18H15M6.5 21.5H9M5.5 25H8.5" fill="none" stroke="#333" stroke-width="1.4" stroke-linecap="butt" stroke-linejoin="miter"/><path d="M17.5 19.5L13 25.3 17.5 31M24.5 19.5L29 25.3 24.5 31" fill="none" stroke="#333" stroke-width="2.1" stroke-linecap="butt" stroke-linejoin="miter"/></svg>
<svg style="left:1088.3px;top:482.7px" width="14.5" height="9" viewBox="0 0 14.5 9"><path d="M1.2 1.2l6 6 6-6" fill="none" stroke="#333" stroke-width="2.3"/></svg>
<svg style="left:1125px;top:474px" width="27" height="24" viewBox="0 0 27 24"><path d="M0.5 22.8H8.3V20.3C4.2 18.3 2 14.8 2 10.9C2 5.3 6.8 1.2 13.3 1.2C19.8 1.2 24.6 5.3 24.6 10.9C24.6 14.8 22.4 18.3 18.3 20.3V22.8H26.3" fill="none" stroke="#333" stroke-width="2.3" stroke-linecap="butt" stroke-linejoin="miter"/></svg>
<svg style="left:1165.7px;top:482.7px" width="14.5" height="9" viewBox="0 0 14.5 9"><path d="M1.2 1.2l6 6 6-6" fill="none" stroke="#333" stroke-width="2.3"/></svg>
<svg style="left:1205px;top:473.5px" width="23.5" height="25" viewBox="0 0 23.5 25"><path d="M10.2 7.3L13.3 4.1A5.2 5.2 0 0 1 20.7 11.4L17.3 14.9M13.2 17.7L10.1 20.9A5.2 5.2 0 0 1 2.8 13.6L6.2 10.1M8.6 16.2L14.8 8.9" fill="none" stroke="#333" stroke-width="2.3" stroke-linecap="round" stroke-linejoin="miter"/></svg>
<svg style="left:1254px;top:470.5px" width="32.5" height="30" viewBox="0 0 32.5 30"><path d="M1.8 0V7H30.5V0M1.8 30V23H30.5V30" fill="none" stroke="#333" stroke-width="2.3" stroke-linecap="butt" stroke-linejoin="miter"/><path d="M7.5 15H14.5M18.5 15H30.5" fill="none" stroke="#333" stroke-width="2.6" stroke-linecap="butt" stroke-linejoin="miter"/><path d="M0.3 11L5 15 0.3 19Z" fill="#333"/></svg>
<div class="abs" style="left:1300.75px;top:463px;width:1.5px;height:47px;background:#c8c8c8"></div>
<svg style="left:1316px;top:469.5px" width="33" height="33" viewBox="0 0 33 33"><path d="M5 11V1.2H22.5L29.5 8.2V21M22.5 1.2V8.2H29.5M5 26V31.5H17" fill="none" stroke="#333" stroke-width="2.1" stroke-linecap="butt" stroke-linejoin="miter"/><text x="0.3" y="23" font-family="Liberation Sans" font-weight="700" font-size="12" fill="#333">PDF</text><path d="M25.5 17V31M21 26.5L25.5 31 30 26.5" fill="none" stroke="#333" stroke-width="2.1" stroke-linecap="butt" stroke-linejoin="miter"/></svg>
<svg style="left:1369.5px;top:469.5px" width="31.5" height="33" viewBox="0 0 31.5 33"><path d="M6 8V1.2H22.5L29.5 8.2V19M22.5 1.2V8.2H29.5M6 29.5H14" fill="none" stroke="#333" stroke-width="2.1" stroke-linecap="butt" stroke-linejoin="miter"/><path d="M2 10H15A2 2 0 0 1 17 12V24A2 2 0 0 1 15 26H2A2 2 0 0 1 0 24V12A2 2 0 0 1 2 10Z" fill="#333"/><text x="2.2" y="22.5" font-family="Liberation Sans" font-weight="700" font-size="12" fill="#fff">W</text><path d="M23.5 17V31M19 26.5L23.5 31 28 26.5" fill="none" stroke="#333" stroke-width="2.1" stroke-linecap="butt" stroke-linejoin="miter"/></svg>

<!-- chatgpt -->
<svg style="left:640px;top:660px" width="55" height="55" viewBox="640 660 55 55"><path fill="#222" fill-rule="evenodd" d="M661.4 673.2L665.6 684.2 676.2 688.4 665.6 692.6 661.4 703.6 657.2 692.6 646.6 688.4 657.2 684.2ZM661.4 682L663.4 686.4 667.8 688.4 663.4 690.4 661.4 695 659.4 690.4 655 688.4 659.4 686.4Z"/><path fill="#222" d="M681.8 667.1L684 671.9 689 674.2 684 676.5 681.8 681.2 679.6 676.5 674.6 674.2 679.6 671.9ZM681.8 695.9L684 700.6 689 702.8 684 705 681.8 709.7 679.6 705 674.6 702.8 679.6 700.6Z"/></svg>
<div class="t" style="left:715px;top:674.3px;font-size:26px;color:#c8c8c8">Use the ChatGPT prompt to generate text. Enter to submit.</div>
<div class="abs" style="left:716px;top:722.8px;width:1520px;height:2px;background:#8a8a8a"></div>
<div class="t" style="left:716px;top:738.4px;font-size:19.2px;color:#0e7c70">Template: Output the result in HTML code: {text}.</div>
<div class="t" style="left:716px;top:767.4px;font-size:19.2px;color:#1a88c9">Change template<span style="display:inline-block;width:1.8px;height:13.6px;background:#7a7a7a;margin:0 6.8px"></span>Clear template<span style="display:inline-block;width:1.8px;height:13.6px;background:#7a7a7a;margin:0 6.8px"></span>Conversations<span style="display:inline-block;width:1.8px;height:13.6px;background:#7a7a7a;margin:0 6.8px"></span>Clear</div>

<!-- dropzone -->
<div class="abs" style="left:644px;top:821px;width:1592px;height:179px;border-radius:5px;background:#f8f8f8"></div><svg style="left:644px;top:821px" width="1592" height="179" viewBox="0 0 1592 179"><rect x="1.5" y="1.5" width="1589" height="176" rx="4" fill="none" stroke="#c2c2c2" stroke-width="3" stroke-dasharray="6.3 3.37"/></svg>
<svg style="left:1385px;top:845px" width="110" height="85" viewBox="1385 845 110 85"><path fill="none" stroke="#c8c8c8" stroke-width="5.8" stroke-linejoin="miter" d="M1430.9 917.2H1416.7A17.85 17.85 0 0 1 1416.7 881.5L1416.6 883A23.5 23.5 0 0 1 1463.6 883V890H1467.3A13.6 13.6 0 0 1 1467.3 917.2H1439.6V884M1426.5 894.5L1439.6 881.4 1452.7 894.5"/></svg>
<div class="t" style="left:1203.5px;top:956px;font-size:19.25px;color:#9a9a9a">Drag and drop files here or click to select files to import.</div>

<!-- save -->
<div class="abs" style="left:647px;top:1044px;width:150px;height:51px;background:#26a69a;border-radius:4px;box-shadow:0 3px 1px -2px rgba(0,0,0,.2),0 2px 2px 0 rgba(0,0,0,.14),0 1px 5px 0 rgba(0,0,0,.12)"></div>
<svg style="left:676px;top:1059px" width="22" height="21" viewBox="0 0 22 21"><g fill="none" stroke="#fff" stroke-width="2.2"><path d="M1.1 1.1h15.5l4.3 4.3v13.5a1 1 0 0 1-1 1H2.1a1 1 0 0 1-1-1z"/></g><rect x="4" y="4" width="10" height="3.6" fill="#fff"/><circle cx="10" cy="14" r="3.3" fill="#fff"/></svg>
<div class="t" style="left:718px;top:1059.6px;font-size:21px;letter-spacing:0.25px;color:#fff">SAVE</div>
<div class="t" style="left:644.5px;top:1140.9px;font-size:19.2px;color:#8c8c8c">Updated by Test Labii at 2024-05-28T23:09:13-07:00 (14 days ago)</div>

<!-- nav buttons -->
<div class="btnw" style="left:598px;top:1240.5px;width:205px;height:86px"></div>
<svg style="left:654px;top:1274px" width="13" height="19" viewBox="0 0 13 19"><path fill="none" stroke="#000" stroke-width="3.2" d="M11.5 1.5L3.5 9.5l8 8"/></svg>
<div class="t" style="left:697px;top:1272.5px;font-size:23px;letter-spacing:0.3px;color:#000">PREV</div>
<div class="abs" style="left:811px;top:1240.5px;width:276px;height:86px;background:#ff9800;border-radius:4px;box-shadow:0 3px 1px -2px rgba(0,0,0,.2),0 2px 2px 0 rgba(0,0,0,.14),0 1px 5px 0 rgba(0,0,0,.12)"></div>
<svg style="left:861px;top:1274px" width="27" height="20" viewBox="0 0 27 20"><path fill="none" stroke="#fff8d8" stroke-width="3.2" d="M1.5 10.5l7.5 7.5L25.5 1.5"/></svg>
<div class="t" style="left:910px;top:1272.5px;font-size:23px;letter-spacing:0.6px;color:#fff8d8">COMPLETE</div>
<div class="btnw" style="left:2074px;top:1240.5px;width:209px;height:86px"></div>
<svg style="left:2131px;top:1274px" width="13" height="19" viewBox="0 0 13 19"><path fill="none" stroke="#000" stroke-width="3.2" d="M1.5 1.5l8 8-8 8"/></svg>
<div class="t" style="left:2173px;top:1272.5px;font-size:23px;letter-spacing:0.9px;color:#000">NEXT</div>



</body></html>
